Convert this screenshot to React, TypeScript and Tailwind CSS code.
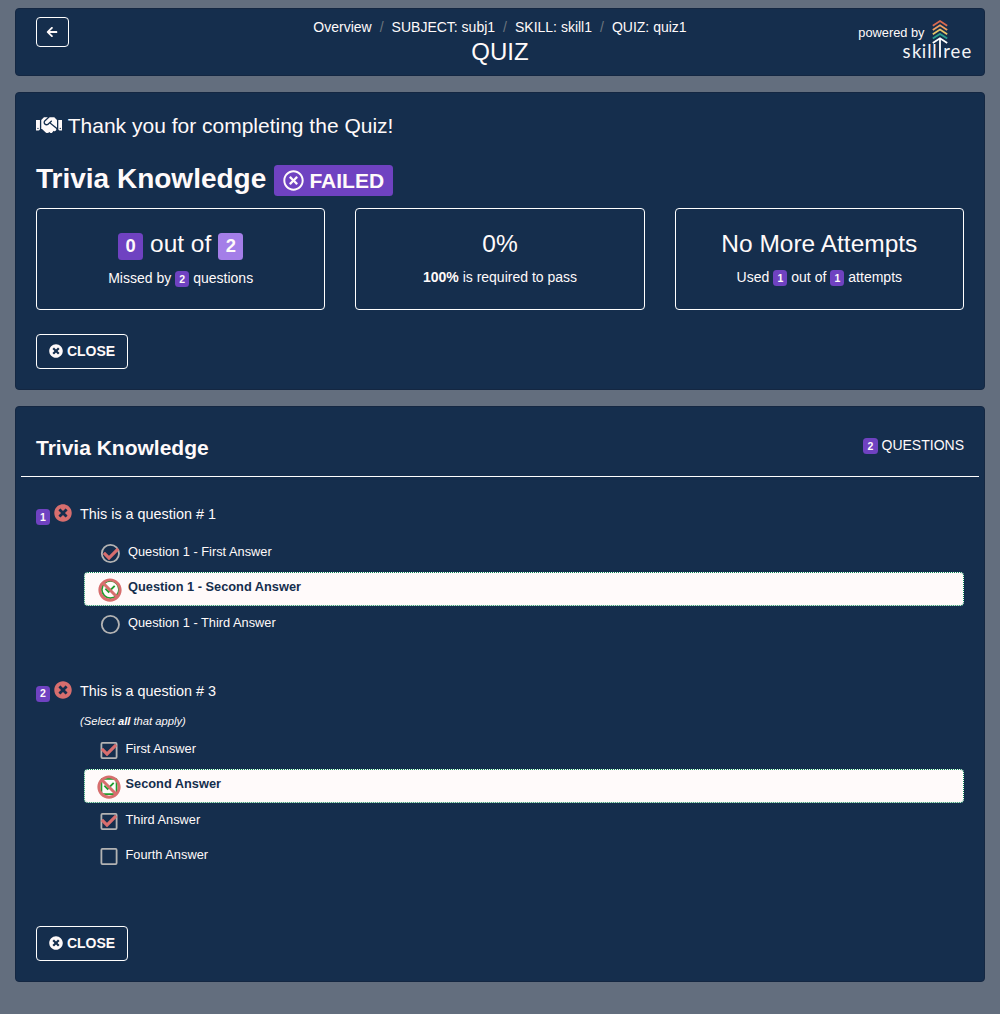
import type { ReactNode } from "react";
import { FaArrowLeft, FaBan, FaCheck, FaHandshake, FaRegTimesCircle, FaTimesCircle } from "react-icons/fa";

const Card = ({ className, children }: { className: string; children: ReactNode }) => (
  <section className={`rounded-[4px] border border-[#142742] bg-[#152e4d] ${className}`}>{children}</section>
);

const Badge = ({ children, className = "" }: { children: ReactNode; className?: string }) => (
  <span
    className={`inline-block rounded-[3.5px] bg-[#6f42c1] px-[4.2px] py-[2.6px] text-center align-baseline text-[10.5px] leading-[10.5px] font-bold ${className}`}
  >
    {children}
  </span>
);

const Close = () => (
  <button className="flex h-[35px] w-[92px] items-center justify-center gap-1 rounded-[4px] border border-white text-[14px] font-bold">
    <FaTimesCircle size={14} className="-mt-px" />
    CLOSE
  </button>
);

const Logo = () => (
  <svg width="70" height="42" viewBox="902 19 70 42" className="block overflow-visible">
    <g fill="none" strokeWidth="1.8">
      <path d="M932.8 25.7 940 21 947.2 25.7" stroke="#d9694f" />
      <path d="M932.8 30 940 25.3 947.2 30" stroke="#ee9f61" />
      <path d="M932.8 34.3 940 29.6 947.2 34.3" stroke="#e7c468" />
      <path d="M932.8 38.6 940 33.9 947.2 38.6" stroke="#2b9d8e" />
      <path d="M932.8 43 940 38.3 947.2 43M940 38.5V57.6" stroke="white" />
    </g>
    <g fill="#f3f4f6" fontFamily="Lato" fontSize="18.5">
      <text y="57.6" x="902.6 911.9 921.8 927.2 932.2">skill</text>
      <text y="57.6" x="943.2 950.6 961.6">ree</text>
    </g>
  </svg>
);

type Answer = { text: string; selected?: boolean; correct?: boolean };

const Mark = ({ square, selected, correct }: { square?: boolean; selected?: boolean; correct?: boolean }) => {
  const color = correct ? "#1f9d2f" : "#b3b3b3";
  return (
    <span className="relative block size-6 shrink-0">
      <svg viewBox="0 0 24 24" className="block size-6" fill="none" stroke={color} strokeWidth="1.8">
        {square ? <rect x="4.4" y="3.9" width="15.2" height="15.2" rx="1" /> : <circle cx="12.4" cy="11.5" r="8.6" />}
        {correct && <path d="m7.4 10.7 3.2 3.2 6.1-6.1" strokeWidth="1.9" />}
      </svg>
      {selected && <FaCheck size={16} className={`absolute top-[3.5px] text-[#d76e6e] ${square ? "left-[4px]" : "left-[4.6px]"}`} />}
      {correct && <FaBan size={24} className={`absolute top-0 text-[#d76e6e] ${square ? "left-0" : "left-[0.4px]"}`} />}
    </span>
  );
};

const Answers = ({ items, square }: { items: Answer[]; square?: boolean }) => (
  <div className="ml-[48px] flex flex-col gap-[1.4px]">
    {items.map((a) => (
      <div
        key={a.text}
        className={`flex h-[34px] rounded-[4px] border border-dotted text-[12.8px] leading-[20px] ${square ? "gap-[4.5px] pl-[12px]" : "gap-[6px] pl-[13px]"} ${a.correct ? "border-[#0a8658] bg-[#fffafa] font-bold text-[#152e4d]" : "border-transparent"}`}
      >
        <span className={a.correct ? "pt-[5px]" : "pt-[4px]"}>
          <Mark square={square} selected={a.selected} correct={a.correct} />
        </span>
        <span className="pt-[4px]">{a.text}</span>
      </div>
    ))}
  </div>
);

const Question = ({ n, text }: { n: number; text: string }) => (
  <div className="flex h-[22px] text-[14.4px] leading-[22px]">
    <Badge className="mt-[6px] mr-[4px] h-[16px] w-[14px] !px-0">{n}</Badge>
    <FaTimesCircle size={18} className="mt-[1px] mr-[8px] shrink-0 text-[#d76e6e]" />
    <span>{text}</span>
  </div>
);

const Stat = ({ children }: { children: ReactNode }) => (
  <div className="h-[102px] flex-1 rounded-[4px] border border-white text-center">{children}</div>
);

const crumbs = ["Overview", "SUBJECT: subj1", "SKILL: skill1", "QUIZ: quiz1"];

export default function App() {
  return (
    <main className="flex h-[1014px] w-[1000px] flex-col gap-4 bg-[#636e7e] px-[15px] pt-2 font-['Liberation_Sans',sans-serif] text-[14px] leading-[21px] text-[#fffafa]">
      <Card className="flex h-[68px] shrink-0 justify-between pr-[12px] pl-5">
        <div className="w-[107px] pt-2">
          <button className="flex h-[30px] w-[33px] items-center justify-center rounded-[4px] border border-white">
            <FaArrowLeft size={12} className="-mt-px -ml-px" />
          </button>
        </div>
        <div className="pt-[8px] text-center">
          <nav className="flex justify-center gap-2">
            {crumbs.map((c, i) => (
              <span key={c} className="flex gap-2">
                {i > 0 && <span className="text-[#6c757d]">/</span>}
                {c}
              </span>
            ))}
          </nav>
          <h1 className="-mt-px text-[24px] leading-[29px]">QUIZ</h1>
        </div>
        <div className="flex w-[115px] justify-end gap-0 pt-[10px]">
          <span className="-mr-[22.5px] pt-[4px] text-[12.8px] leading-[20px] whitespace-nowrap">powered by</span>
          <Logo />
        </div>
      </Card>

      <Card className="h-[298px] shrink-0 px-5 pt-5">
        <h2 className="flex h-[26px] items-center gap-[5.5px] text-[21px] leading-[26px]">
          <FaHandshake size={26.25} className="-mt-[1.5px]" />
          Thank you for completing the Quiz!
        </h2>
        <div className="mt-[22px] flex h-[36px] items-center gap-2 text-[28px] leading-[36px] font-bold">
          <h3>Trivia Knowledge</h3>
          <span className="mt-[3px] flex h-[31px] w-[119px] items-center justify-center gap-[5px] rounded-[3.5px] bg-[#6f42c1] text-[21px] leading-[31px]">
            <FaRegTimesCircle size={21} className="-mt-px" />
            FAILED
          </span>
        </div>
        <div className="mt-[11px] flex gap-[30px]">
          <Stat>
            <div className="mt-[19px] flex h-[30px] items-center justify-center gap-[7px] text-[24.5px] leading-[29px]">
              <span className="mt-[7px] h-[27px] w-[25px] rounded-[3.5px] bg-[#6f42c1] text-[18.4px] leading-[26px] font-bold">0</span>
              out of
              <span className="mt-[7px] h-[27px] w-[25px] rounded-[3.5px] bg-[#a47ee8] text-[18.4px] leading-[26px] font-bold">2</span>
            </div>
            <div className="mt-[10px]">Missed by <Badge>2</Badge> questions</div>
          </Stat>
          <Stat>
            <div className="mt-[20px] text-[24.5px] leading-[29px]">0%</div>
            <div className="mt-[9px]"><b>100%</b> is required to pass</div>
          </Stat>
          <Stat>
            <div className="mt-[20px] text-[24.5px] leading-[29px]">No More Attempts</div>
            <div className="mt-[9px]">Used <Badge>1</Badge> out of <Badge>1</Badge> attempts</div>
          </Stat>
        </div>
        <div className="mt-6"><Close /></div>
      </Card>

      <Card className="h-[576px] shrink-0">
        <header className="mx-[5px] flex h-[70px] justify-between border-b border-white px-[15px]">
          <h3 className="pt-[28px] text-[21px] leading-[26px] font-bold">Trivia Knowledge</h3>
          <div className="pt-[28px]"><Badge>2</Badge> QUESTIONS</div>
        </header>
        <div className="px-5 pt-[26px]">
          <Question n={1} text="This is a question # 1" />
          <div className="mt-[12px]">
            <Answers
              items={[
                { text: "Question 1 - First Answer", selected: true },
                { text: "Question 1 - Second Answer", correct: true },
                { text: "Question 1 - Third Answer" },
              ]}
            />
          </div>
          <div className="mt-[38px]"><Question n={2} text="This is a question # 3" /></div>
          <p className="mt-[11px] ml-[44px] text-[11.2px] leading-[17px] italic">(Select <b>all</b> that apply)</p>
          <div className="mt-[4px]">
            <Answers
              square
              items={[
                { text: "First Answer", selected: true },
                { text: "Second Answer", correct: true },
                { text: "Third Answer", selected: true },
                { text: "Fourth Answer" },
              ]}
            />
          </div>
          <div className="mt-[52px]"><Close /></div>
        </div>
      </Card>
    </main>
  );
}
